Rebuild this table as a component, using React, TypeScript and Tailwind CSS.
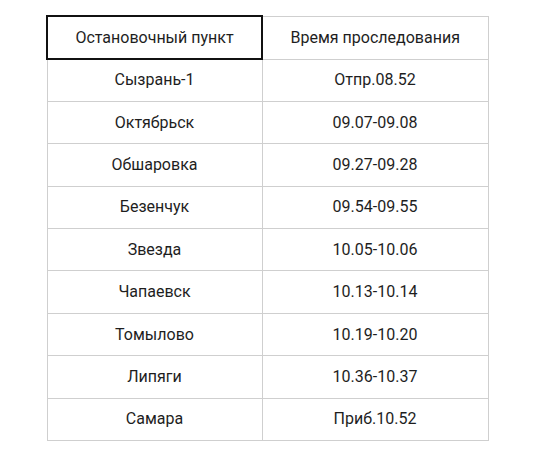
import React from "react";

const rows: [string, string][] = [
  ["Сызрань-1", "Отпр.08.52"],
  ["Октябрьск", "09.07-09.08"],
  ["Обшаровка", "09.27-09.28"],
  ["Безенчук", "09.54-09.55"],
  ["Звезда", "10.05-10.06"],
  ["Чапаевск", "10.13-10.14"],
  ["Томылово", "10.19-10.20"],
  ["Липяги", "10.36-10.37"],
  ["Самара", "Приб.10.52"],
];

export default function App() {
  return (
    <div className="w-[539px] h-[460px] bg-white pt-[15px] pl-[46px]" style={{ fontFamily: "Roboto, sans-serif" }}>
      <table className="border-collapse text-[16px] text-[#1e1e1e]">
        <tbody>
          <tr className="h-[43px]">
            <td className="w-[215px] border-2 border-[#111] text-center align-middle font-normal">Остановочный пункт</td>
            <td className="w-[226px] border border-[#cfcfcf] text-center align-middle">Время проследования</td>
          </tr>
          {rows.map(([a, b]) => (
            <tr key={a} className="h-[42.4px]">
              <td className="border border-[#cfcfcf] text-center align-middle">{a}</td>
              <td className="border border-[#cfcfcf] text-center align-middle">{b}</td>
            </tr>
          ))}
        </tbody>
      </table>
    </div>
  );
}
